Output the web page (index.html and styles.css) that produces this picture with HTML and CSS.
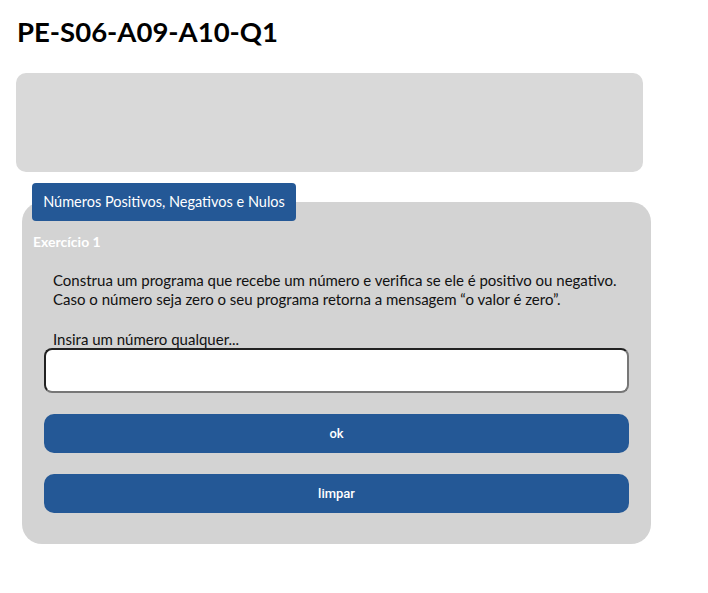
FILE: index.html
```html
<!DOCTYPE html>
<html lang="pt">
<head>
<meta charset="utf-8">
<title>PE-S06-A09-A10-Q1</title>
<link rel="stylesheet" href="styles.css">
</head>
<body>
<div class="page">
  <h1 class="title">PE-S06-A09-A10-Q1</h1>
  <div class="banner"></div>
  <section class="exercise">
    <div class="tab">Números Positivos, Negativos e Nulos</div>
    <div class="card">
      <h2 class="card-title">Exercício 1</h2>
      <p class="statement">Construa um programa que recebe um número e verifica se ele é positivo ou negativo.<br>Caso o número seja zero o seu programa retorna a mensagem “o valor é zero”.</p>
      <label class="field-label" for="num">Insira um número qualquer...</label>
      <input class="field" id="num" type="text">
      <button class="btn" type="button">ok</button>
      <button class="btn" type="button">limpar</button>
    </div>
  </section>
</div>
</body>
</html>
```
FILE: styles.css
```css
* { box-sizing: border-box; }
html, body { margin: 0; padding: 0; background: #fff; }
body { font-family: "Lato", "Open Sans", sans-serif; color: #111; }
.page { padding: 16px 0 0 16px; width: 660px; }
.title {
  margin: 0 0 0 1px;
  font-size: 27.5px;
  line-height: 32px;
  font-weight: 700;
  color: #000;
}
.banner {
  margin-top: 25px;
  width: 627px;
  height: 99px;
  background: #d9d9d9;
  border-radius: 10px;
}
.exercise { margin: 11px 0 0 6px; width: 629px; }
.tab {
  position: relative;
  z-index: 1;
  margin: 0 0 -19px 10px;
  width: 264px;
  height: 38px;
  background: #245896;
  color: #fff;
  border-radius: 4px;
  font-size: 14.5px;
  line-height: 38px;
  text-align: center;
}
.card {
  background: #d3d3d3;
  border-radius: 20px;
  padding: 31px 22px 31px 22px;
  display: flex;
  flex-direction: column;
}
.card-title {
  margin: 0 0 0 -11px;
  font-size: 14px;
  line-height: 18px;
  font-weight: 700;
  color: #fff;
}
.statement {
  margin: 20px 0 0 9px;
  font-size: 15px;
  line-height: 19px;
  color: #111;
}
.field-label {
  margin: 21px 0 0 9px;
  font-size: 15px;
  line-height: 18px;
  color: #111;
}
.field {
  margin-top: 0;
  height: 45px;
  width: 100%;
  border: 2px solid;
  border-color: #222 #777 #777 #222;
  border-radius: 8px;
  background: #fff;
}
.btn {
  margin-top: 21px;
  height: 39px;
  width: 100%;
  border: 0;
  border-radius: 10px;
  background: #245896;
  color: #fff;
  font-family: "Roboto", "Liberation Sans", sans-serif;
  font-weight: 500;
  font-size: 13px;
}
```
